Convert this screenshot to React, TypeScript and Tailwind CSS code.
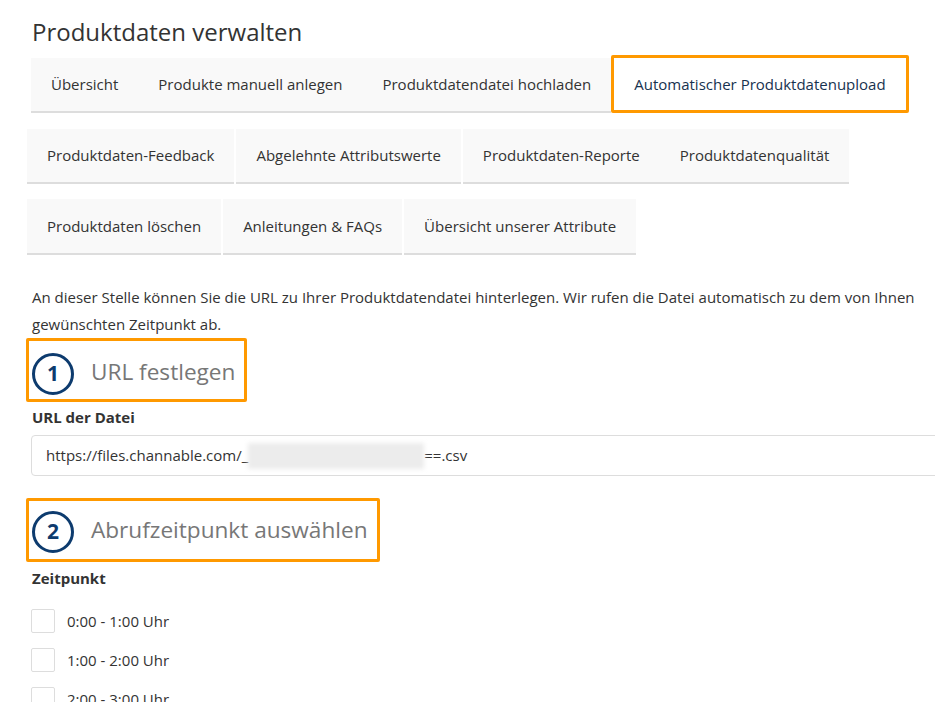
import React from 'react';

const font = { fontFamily: '"Open Sans", "Noto Sans", sans-serif' };

type Tab = { label: string; sep?: boolean };

const rowOne: Tab[] = [
  { label: 'Übersicht' },
  { label: 'Produkte manuell anlegen' },
  { label: 'Produktdatendatei hochladen' },
];

const rowTwo: Tab[] = [
  { label: 'Produktdaten-Feedback', sep: true },
  { label: 'Abgelehnte Attributswerte', sep: true },
  { label: 'Produktdaten-Reporte' },
  { label: 'Produktdatenqualität' },
];

const rowThree: Tab[] = [
  { label: 'Produktdaten löschen', sep: true },
  { label: 'Anleitungen & FAQs', sep: true },
  { label: 'Übersicht unserer Attribute' },
];

const TabCell: React.FC<{ tab: Tab; h: string }> = ({ tab, h }) => (
  <div
    className={`${h} flex items-center px-5 bg-[#f9f9f9] border-b-2 border-[#dddddd] text-[#333] whitespace-nowrap ${
      tab.sep ? 'mr-[2px]' : ''
    }`}
  >
    {tab.label}
  </div>
);

const StepHeading: React.FC<{ num: number; title: string; pad: string }> = ({ num, title, pad }) => (
  <div className={`inline-flex items-center border-[3px] border-[#ff9900] rounded-[2px] pl-[3px] pr-[9px] h-[64px] ${pad}`}>
    <div className="w-[42px] h-[42px] rounded-full border-[3px] border-[#0d3b6e] flex items-center justify-center text-[#0d3b6e] font-bold text-[21px] leading-none">
      {num}
    </div>
    <span className="ml-[17px] text-[22.6px] text-[#777] leading-none pb-[2px]">{title}</span>
  </div>
);

const hours = ['0:00 - 1:00 Uhr', '1:00 - 2:00 Uhr', '2:00 - 3:00 Uhr'];

export default function App() {
  return (
    <div className="w-[935px] h-[702px] overflow-hidden bg-white text-[15px] text-[#333]" style={font}>
      <div className="pl-[27px]">
        <h1 className="pl-[5px] pt-[17px] text-[24px] leading-[30px] text-[#333] font-normal">
          Produktdaten verwalten
        </h1>

        {/* row 1 */}
        <div className="flex items-end ml-[4px] mt-[8px]">
          {rowOne.map((t) => (
            <TabCell key={t.label} tab={t} h="h-[55px]" />
          ))}
          <div className="h-[58px] flex items-center px-[20px] border-[3px] border-[#ff9900] rounded-[2px] bg-white text-[#17324f] whitespace-nowrap">
            Automatischer Produktdatenupload
          </div>
        </div>

        {/* row 2 */}
        <div className="flex mt-[16px]">
          {rowTwo.map((t) => (
            <TabCell key={t.label} tab={t} h="h-[55px]" />
          ))}
        </div>

        {/* row 3 */}
        <div className="flex mt-[15px]">
          {rowThree.map((t) => (
            <TabCell key={t.label} tab={t} h="h-[56px]" />
          ))}
        </div>

        <p className="pl-[5px] mt-[29px] leading-[27px] pr-[8px]">
          An dieser Stelle können Sie die URL zu Ihrer Produktdatendatei hinterlegen. Wir rufen die Datei automatisch zu dem von Ihnen gewünschten Zeitpunkt ab.
        </p>

        <div className="-ml-[1px]">
          <StepHeading num={1} title="URL festlegen" pad="pt-[7px]" />
        </div>

        <div className="pl-[5px] mt-[4px] font-bold leading-[22px]">URL der Datei</div>
        <div className="ml-[4px] mt-[7px] h-[41px] w-[940px] border border-[#dddddd] rounded-[4px] flex items-center pl-[14px] text-[#333] whitespace-nowrap">
          <span>https://files.channable.com/_</span>
          <span className="inline-block w-[176px] h-[26px] bg-[#ececec] blur-[2px]" />
          <span>==.csv</span>
        </div>

        <div className="-ml-[1px] mt-[22px]">
          <StepHeading num={2} title="Abrufzeitpunkt auswählen" pad="pt-[3px]" />
        </div>

        <div className="pl-[5px] mt-[5px] font-bold leading-[22px]">Zeitpunkt</div>

        <div className="mt-[20px] pl-[4px] flex flex-col gap-[15px]">
          {hours.map((h) => (
            <label key={h} className="flex items-center">
              <span className="w-[24px] h-[24px] border border-[#dddddd] rounded-[2px] bg-white" />
              <span className="ml-[12px]">{h}</span>
            </label>
          ))}
        </div>
      </div>
    </div>
  );
}
